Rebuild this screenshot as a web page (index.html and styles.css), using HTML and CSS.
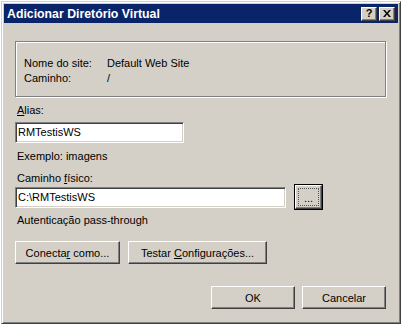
FILE: index.html
```html
<!DOCTYPE html>
<html lang="pt">
<head>
    <meta charset="UTF-8">
    <title>Adicionar Diretório Virtual</title>
    <link rel="stylesheet" href="styles.css">
</head>
<body>

    <div class="window">
        <div class="titlebar">
            <span class="title">Adicionar Diretório Virtual</span>
            <div class="title_btns">
                <span class="title_btn help">?</span>
                <span class="title_btn close">
                    <svg width="8" height="7" viewBox="0 0 8 7">
                        <path d="M0 0h2l2 2.5L6 0h2L5 3.5 8 7H6L4 4.5 2 7H0l3-3.5z" fill="#000"/>
                    </svg>
                </span>
            </div>
        </div>

        <div class="content">
            <div class="group">
                <div class="info_row">
                    <span class="info_key">Nome do site:</span>
                    <span>Default Web Site</span>
                </div>
                <div class="info_row">
                    <span class="info_key">Caminho:</span>
                    <span>/</span>
                </div>
            </div>

            <label class="field_label alias_label"><u>A</u>lias:</label>
            <div class="edit alias_edit">RMTestisWS</div>
            <p class="hint">Exemplo: imagens</p>

            <label class="field_label path_label">Caminho <u>f</u>ísico:</label>
            <div class="path_row">
                <div class="edit path_edit">C:\RMTestisWS</div>
                <div class="browse">
                    <span class="browse_inner">...</span>
                </div>
            </div>
            <p class="hint auth">Autenticação pass-through</p>

            <div class="btn_row">
                <span class="btn connect"><span>Conecta<u>r</u> como...</span></span>
                <span class="btn test"><span>Testar <u>C</u>onfigurações...</span></span>
            </div>

            <div class="footer">
                <span class="btn dlg_btn">OK</span>
                <span class="btn dlg_btn">Cancelar</span>
            </div>
        </div>
    </div>

</body>
</html>
```

FILE: styles.css
```css
* {
    padding: 0;
    margin: 0;
    box-sizing: border-box;
    font-family: 'Liberation Sans', Arial, sans-serif;
    font-size: 11px;
    color: black;
}
body {
    background: #fff;
}
.window {
    width: 400px;
    height: 323px;
    margin: 1px 0 0 1px;
    padding: 1px;
    background: #d4d0c8;
    border: 1px solid #d4d0c8;
    border-right-color: #404040;
    border-bottom-color: #404040;
    box-shadow: inset 1px 1px #fff, inset -1px -1px #808080;
    display: flex;
    flex-direction: column;
}
.titlebar {
    height: 19px;
    margin: 1px 1px 0 1px;
    padding: 0 3px 0 3px;
    background: #0a246a;
    display: flex;
    align-items: center;
    justify-content: space-between;
}
.title {
    color: #fff;
    font-weight: bold;
    font-size: 12.3px;
}
.title_btns {
    display: flex;
    gap: 2px;
}
.title_btn {
    width: 16px;
    height: 14px;
    background: #d4d0c8;
    border: 1px solid #fff;
    border-right-color: #404040;
    border-bottom-color: #404040;
    box-shadow: inset -1px -1px #808080;
    display: flex;
    align-items: center;
    justify-content: center;
    font-weight: bold;
    font-size: 11px;
    line-height: 1;
}
.content {
    flex: 1;
    padding: 0 13px 0 12px;
    display: flex;
    flex-direction: column;
}
.group {
    margin-top: 18px;
    height: 56px;
    padding: 14px 0 0 8px;
    border: 1px solid #808080;
    box-shadow: 1px 1px #fff, inset 1px 1px #fff;
}
.info_row {
    display: flex;
    height: 15px;
    line-height: 15px;
}
.info_key {
    width: 83px;
}
.field_label {
    display: block;
    margin: 6px 0 0 2px;
    line-height: 14px;
}
.edit {
    height: 21px;
    padding: 0 2px;
    line-height: 19px;
    background: #fff;
    border: 1px solid;
    border-color: #808080 #fff #fff #808080;
    box-shadow: inset 1px 1px #404040, inset -1px -1px #d4d0c8;
}
.alias_edit {
    width: 169px;
    margin-top: 5px;
}
.hint {
    margin: 6px 0 0 2px;
    line-height: 14px;
}
.path_label {
    margin-top: 8px;
}
.path_row {
    display: flex;
    align-items: center;
    gap: 8px;
    margin-top: -1px;
}
.path_edit {
    width: 271px;
}
.browse {
    width: 29px;
    height: 26px;
    border: 1px solid #000;
}
.browse_inner {
    display: flex;
    align-items: flex-end;
    justify-content: center;
    width: 100%;
    height: 100%;
    padding-bottom: 4px;
    line-height: 1;
    border: 1px solid #fff;
    border-right-color: #404040;
    border-bottom-color: #404040;
    box-shadow: inset -1px -1px #808080;
    outline: 1px dotted #555;
    outline-offset: -4px;
}
.auth {
    margin-top: 3px;
}
.btn {
    display: flex;
    align-items: center;
    justify-content: center;
    height: 23px;
    background: #d4d0c8;
    border: 1px solid #fff;
    border-right-color: #404040;
    border-bottom-color: #404040;
    box-shadow: inset -1px -1px #808080;
}
.btn_row {
    display: flex;
    gap: 8px;
    margin-top: 14px;
}
.connect {
    width: 105px;
}
.test {
    width: 139px;
}
.footer {
    display: flex;
    justify-content: flex-end;
    gap: 7px;
    margin-top: 22px;
}
.dlg_btn {
    width: 84px;
}
```
